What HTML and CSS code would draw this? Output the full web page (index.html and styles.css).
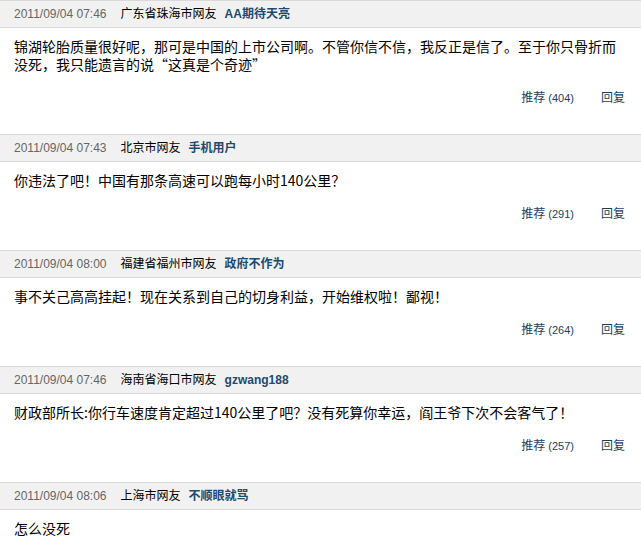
FILE: index.html
```html
<!DOCTYPE html>
<html lang="zh-CN">
<head>
    <meta charset="UTF-8">
    <title>网友评论</title>
    <link rel="stylesheet" href="styles.css">
</head>
<body>
    <div class="comment-list">
        <div class="comment">
            <div class="comment-head">
                <span class="time">2011/09/04 07:46</span>
                <span class="from">广东省珠海市网友</span>
                <span class="nick">AA期待天亮</span>
            </div>
            <div class="comment-body">
                <p>锦湖轮胎质量很好呢，那可是中国的上市公司啊。不管你信不信，我反正是信了。至于你只骨折而没死，我只能遗言的说“这真是个奇迹”</p>
                <div class="actions">
                    <a href="#">推荐<span class="count">(404)</span></a>
                    <a href="#">回复</a>
                </div>
            </div>
        </div>

        <div class="comment">
            <div class="comment-head">
                <span class="time">2011/09/04 07:43</span>
                <span class="from">北京市网友</span>
                <span class="nick">手机用户</span>
            </div>
            <div class="comment-body">
                <p>你违法了吧！中国有那条高速可以跑每小时140公里？</p>
                <div class="actions">
                    <a href="#">推荐<span class="count">(291)</span></a>
                    <a href="#">回复</a>
                </div>
            </div>
        </div>

        <div class="comment">
            <div class="comment-head">
                <span class="time">2011/09/04 08:00</span>
                <span class="from">福建省福州市网友</span>
                <span class="nick">政府不作为</span>
            </div>
            <div class="comment-body">
                <p>事不关己高高挂起！现在关系到自己的切身利益，开始维权啦！鄙视！</p>
                <div class="actions">
                    <a href="#">推荐<span class="count">(264)</span></a>
                    <a href="#">回复</a>
                </div>
            </div>
        </div>

        <div class="comment">
            <div class="comment-head">
                <span class="time">2011/09/04 07:46</span>
                <span class="from">海南省海口市网友</span>
                <span class="nick">gzwang188</span>
            </div>
            <div class="comment-body">
                <p>财政部所长:你行车速度肯定超过140公里了吧？没有死算你幸运，阎王爷下次不会客气了！</p>
                <div class="actions">
                    <a href="#">推荐<span class="count">(257)</span></a>
                    <a href="#">回复</a>
                </div>
            </div>
        </div>

        <div class="comment">
            <div class="comment-head">
                <span class="time">2011/09/04 08:06</span>
                <span class="from">上海市网友</span>
                <span class="nick">不顺眼就骂</span>
            </div>
            <div class="comment-body">
                <p>怎么没死</p>
            </div>
        </div>
    </div>
</body>
</html>
```

FILE: styles.css
```css
html {
    overflow: hidden;
}
body {
    margin: 0;
    padding: 0;
    background: #fff;
    color: #000;
    font-family: 'Liberation Sans', 'Noto Sans CJK SC', sans-serif;
}
.comment-head {
    display: flex;
    align-items: center;
    height: 26px;
    padding: 0 14px;
    background: #f1f1f1;
    border-top: 1px solid #d9d9d9;
    border-bottom: 1px solid #d9d9d9;
    font-size: 12px;
    line-height: 26px;
}
.time {
    color: #666;
}
.from {
    margin-left: 14px;
}
.nick {
    margin-left: 8px;
    font-weight: bold;
    color: #1d4a6f;
}
.comment-body {
    padding: 9px 16px 27px 14px;
}
.comment-body p {
    margin: 0;
    font-family: 'Noto Sans CJK SC', sans-serif;
    font-size: 14px;
    line-height: 18px;
}
.actions {
    display: flex;
    justify-content: flex-end;
    gap: 27px;
    margin-top: 16px;
    font-size: 12px;
    line-height: 18px;
}
.actions a {
    color: #1b3f5c;
    text-decoration: none;
}
.count {
    margin-left: 3px;
    font-size: 11px;
}
```
